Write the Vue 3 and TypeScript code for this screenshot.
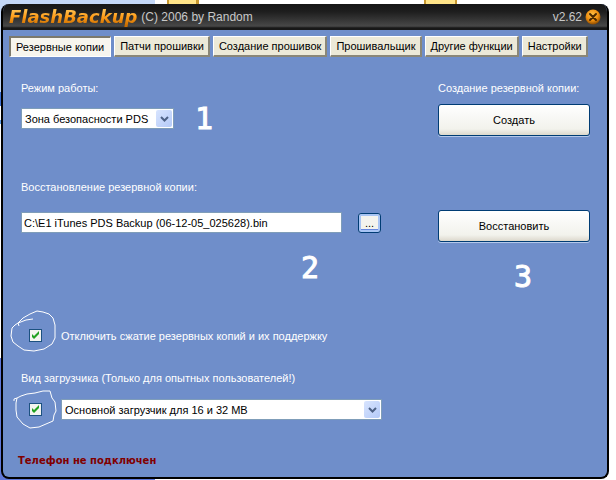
<script setup lang="ts">
import { ref } from 'vue'

const tabs: string[] = [
  'Резервные копии',
  'Патчи прошивки',
  'Создание прошивок',
  'Прошивальщик',
  'Другие функции',
  'Настройки',
]
const activeTab = ref<string>(tabs[0])
const mode = ref<string>('Зона безопасности PDS')
const file = ref<string>('C:\\E1 iTunes PDS Backup (06-12-05_025628).bin')
const noCompression = ref<boolean>(true)
const customLoader = ref<boolean>(true)
const loader = ref<string>('Основной загрузчик для 16 и 32 MB')
</script>

<template>
  <div class="desktop">
    <div class="window">
      <header class="titlebar">
        <h1 class="logo">FlashBackup</h1>
        <span class="copyright">(C) 2006 by Random</span>
        <span class="version">v2.62</span>
        <button class="close" type="button" aria-label="Закрыть">
          <svg viewBox="0 0 16 16" aria-hidden="true">
            <defs>
              <radialGradient id="orb" cx="45%" cy="35%" r="65%">
                <stop offset="0" stop-color="#ffc24a" />
                <stop offset="0.6" stop-color="#f09010" />
                <stop offset="1" stop-color="#8a4a00" />
              </radialGradient>
            </defs>
            <circle cx="8" cy="8" r="7.5" fill="url(#orb)" />
            <path d="M5 5L11 11M11 5L5 11" stroke="#4a2800" stroke-width="2" stroke-linecap="round" />
          </svg>
        </button>
      </header>

      <nav class="tabs">
        <button
          v-for="tab in tabs"
          :key="tab"
          type="button"
          class="tab"
          :class="{ active: tab === activeTab }"
          @click="activeTab = tab"
        >{{ tab }}</button>
      </nav>

      <main class="content">
        <section class="row">
          <div class="main-col">
            <label class="caption" for="mode">Режим работы:</label>
            <div class="line">
              <div class="combo combo-mode">
                <select id="mode" v-model="mode">
                  <option>Зона безопасности PDS</option>
                </select>
                <span class="arrow">
                  <svg viewBox="0 0 9 6" aria-hidden="true"><path d="M1 1L4.500 4.500L8 1" /></svg>
                </span>
              </div>
            </div>
            <span class="mark mark-one">1</span>
          </div>
          <div class="side-col">
            <span class="caption">Создание резервной копии:</span>
            <button class="action" type="button">Создать</button>
          </div>
        </section>

        <section class="row restore">
          <div class="main-col">
            <label class="caption" for="file">Восстановление резервной копии:</label>
            <div class="line">
              <input id="file" v-model="file" class="path" type="text" />
              <button class="browse" type="button" aria-label="Обзор">...</button>
            </div>
            <span class="mark mark-two">2</span>
          </div>
          <div class="side-col">
            <button class="action" type="button">Восстановить</button>
            <span class="mark mark-three">3</span>
          </div>
        </section>

        <section class="option">
          <span class="check">
            <input id="compression" v-model="noCompression" type="checkbox" />
            <svg class="tick" viewBox="0 0 13 13" aria-hidden="true"><path d="M3 5v3l2 2l5-5v-3l-5 5z" /></svg>
            <svg class="loop loop-top" viewBox="0 0 48 44" aria-hidden="true">
              <path d="M23 9L16 10L8 13L9 16M8 13L5 15L2 18L1 26L3 32L8 36L14 40L24 41L34 39L42 34L45 28L45 15L43 8L39 4L33 2L27 1L20 4L13 8L8 13" />
            </svg>
          </span>
          <label for="compression">Отключить сжатие резервных копий и их поддержку</label>
        </section>

        <section class="boot">
          <label class="caption" for="loader">Вид загрузчика (Только для опытных пользователей!)</label>
          <div class="option">
            <span class="check">
              <input id="custom" v-model="customLoader" type="checkbox" aria-label="Вид загрузчика" />
              <svg class="tick" viewBox="0 0 13 13" aria-hidden="true"><path d="M3 5v3l2 2l5-5v-3l-5 5z" /></svg>
              <svg class="loop loop-bottom" viewBox="0 0 46 42" aria-hidden="true">
                <path d="M1 11L1 9L4 8L8 6L14 4L22 3L30 1L37 1L39 8L42 12L43 21L41 25L40 31L33 34L26 37L17 38L10 34L4 27L3 20L3 13L4 8" />
              </svg>
            </span>
            <div class="combo combo-loader">
              <select id="loader" v-model="loader">
                <option>Основной загрузчик для 16 и 32 MB</option>
              </select>
              <span class="arrow">
                <svg viewBox="0 0 9 6" aria-hidden="true"><path d="M1 1L4.500 4.500L8 1" /></svg>
              </span>
            </div>
          </div>
        </section>
      </main>

      <footer class="status">Телефон не подключен</footer>
    </div>
  </div>
</template>

<style>
body {
  background: #ffffff;
}
</style>

<style scoped>
.desktop {
  box-sizing: border-box;
  display: flex;
  min-height: 100vh;
  padding: 4px 7px 1px 1px;
  color: #ffffff;
  font: 11px/14px "Liberation Sans", Arial, sans-serif;
  background:
    linear-gradient(90deg, transparent 167px, #c89830 167px 169px, #ffe488 169px 196px, #c89830 196px 199px, transparent 199px 424px, #c89830 424px 426px, #ffe488 426px 455px, #c89830 455px 457px, transparent 457px) 0 0 / 100% 8px no-repeat,
    linear-gradient(#c4d8f8, #c4d8f8) 0 0 / 155px 10px no-repeat,
    linear-gradient(#c4d8f8 0 92px, #4070d0 92px 106px, #ffffff 106px 120px, #60a0e8 120px 124px, #ffffff 124px 358px, #6078d8 358px) 0 0 / 8px 100% no-repeat,
    linear-gradient(#6078d8, #6078d8) 0 100% / 155px 8px no-repeat,
    #ffffff;
}

.window {
  flex: 1;
  display: flex;
  flex-direction: column;
  box-sizing: border-box;
  overflow: hidden;
  border: solid #000000;
  border-width: 0 2px 2px;
  border-radius: 8px;
  background: #6f8eca;
}

button,
input,
select {
  margin: 0;
  color: #000000;
  font: inherit;
}

.titlebar {
  display: flex;
  align-items: center;
  height: 26px;
  padding: 0 6px;
  background: linear-gradient(#161616, #1e1e1e 30%, #484848 85%, #181818 92%);
}

.logo {
  margin: 0;
  padding-right: 4px;
  font: italic bold 18px/24px "DejaVu Sans", sans-serif;
  color: transparent;
  background: linear-gradient(#ffc050 20%, #ff9c18 50%, #c86c00 85%);
  background-clip: text;
}

.copyright,
.version {
  color: #c8c8c8;
  font-size: 12px;
}

.version {
  margin-left: auto;
}

.close {
  width: 16px;
  height: 16px;
  margin-left: 3px;
  padding: 0;
  border: 0;
  background: none;
}

.close svg {
  display: block;
}

.tabs {
  display: flex;
  gap: 3px;
  padding: 6px 6px 0;
}

.tab {
  height: 21px;
  padding: 0 4px 0 5px;
  border: solid;
  border-width: 1px 2px 2px 1px;
  border-color: #ffffff #8a8778 #8a8778 #ffffff;
  background: #ece9d8;
  line-height: 16px;
  white-space: nowrap;
}

.tab.active {
  padding-right: 6px;
  border-width: 2px 1px 1px 2px;
  border-color: #7c796c #ffffff #ffffff #7c796c;
  background: #f7f5ee;
}

.content {
  padding: 24px 17px 0 18px;
}

.row {
  display: flex;
  justify-content: space-between;
}

.main-col {
  position: relative;
  width: 360px;
}

.side-col {
  position: relative;
  width: 152px;
}

.caption {
  display: block;
  white-space: nowrap;
}

.line {
  display: flex;
  align-items: center;
  justify-content: space-between;
  height: 21px;
  margin-top: 13px;
}

.restore {
  align-items: flex-end;
  margin-top: 44px;
}

.restore .line {
  margin-top: 18px;
  margin-bottom: 9px;
}

.combo {
  position: relative;
  display: flex;
  box-sizing: border-box;
  height: 21px;
  border: 1px solid #7f9db9;
  background: #ffffff;
}

.combo-mode {
  width: 153px;
}

.combo-loader {
  width: 321px;
}

.combo select {
  flex: 1;
  padding: 0 20px 0 3px;
  border: 0;
  background: transparent;
  appearance: none;
}

.arrow {
  position: absolute;
  top: 1px;
  right: 1px;
  bottom: 1px;
  display: flex;
  align-items: center;
  justify-content: center;
  width: 16px;
  border-radius: 2px;
  background: linear-gradient(135deg, #d8e4fe, #b4caf8);
  pointer-events: none;
}

.arrow svg {
  width: 9px;
  height: 6px;
}

.arrow path {
  fill: none;
  stroke: #4d6185;
  stroke-width: 2;
}

.path {
  box-sizing: border-box;
  width: 321px;
  height: 21px;
  padding: 0 2px;
  border: 1px solid #7f9db9;
  background: #ffffff;
}

.browse {
  width: 23px;
  height: 20px;
  padding: 0;
  border: 1px solid #003c74;
  border-radius: 3px;
  background: #f4f3ee;
  box-shadow: inset 0 0 0 2px #a8c4f4, inset 0 -3px 0 #6888e0;
  line-height: 14px;
}

.action {
  width: 152px;
  height: 32px;
  margin-top: 9px;
  padding: 0;
  border: 1px solid #003c74;
  border-radius: 3px;
  background: linear-gradient(#ffffff, #f2f2ec 80%, #dcd8cc);
  box-shadow: 0 1px 0 #b4c8ea;
}

.mark {
  position: absolute;
  font: 30px/34px "DejaVu Sans Mono", monospace;
  -webkit-text-stroke: 1px #ffffff;
}

.mark-one {
  top: 21px;
  left: 174px;
}

.mark-two {
  top: 71px;
  left: 280px;
}

.mark-three {
  top: 59px;
  left: 76px;
}

.restore + .option {
  margin-top: 83px;
}

.option {
  display: flex;
  align-items: center;
  height: 21px;
  padding-left: 8px;
}

.check {
  position: relative;
  width: 13px;
  height: 13px;
  margin-right: 19px;
}

.check input {
  display: block;
  width: 13px;
  height: 13px;
  border: 1px solid #1c5180;
  background: #f4f4f0;
  appearance: none;
}

.tick,
.loop {
  position: absolute;
  pointer-events: none;
}

.tick {
  inset: 0;
  fill: #21a121;
  visibility: hidden;
}

.check input:checked + .tick {
  visibility: visible;
}

.loop {
  fill: none;
  stroke: #ffffff;
  stroke-width: 1;
}

.loop-top {
  top: -19px;
  left: -19px;
  width: 48px;
  height: 44px;
}

.loop-bottom {
  top: -13px;
  left: -16px;
  width: 46px;
  height: 42px;
}

.boot {
  margin-top: 25px;
}

.boot .option {
  margin-top: 14px;
}

.status {
  margin-top: auto;
  padding: 0 15px 9px;
  color: #800000;
  font: bold 10px/14px "DejaVu Sans", Verdana, sans-serif;
}
</style>
